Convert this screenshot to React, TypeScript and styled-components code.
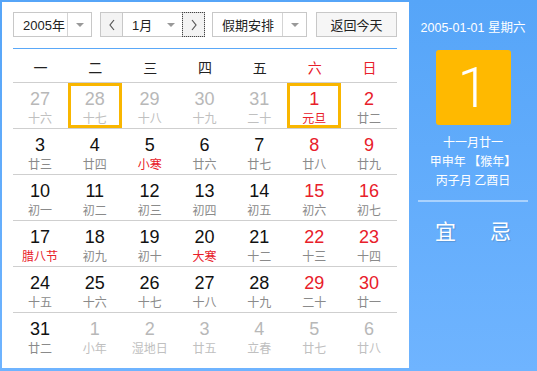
import React from 'react';
import styled, { createGlobalStyle } from 'styled-components';

const GlobalStyle = createGlobalStyle`
  body {
    margin: 0;
    font-family: 'Liberation Sans', 'Noto Sans CJK SC', sans-serif;
  }
`;

type Kind = 'prev' | 'cur' | 'next';
interface Day {
  num: number;
  lunar: string;
  kind: Kind;
  festival?: boolean;
  selected?: boolean;
}

const WEEK = ['一', '二', '三', '四', '五', '六', '日'];

const raw: [number, string, Kind, number?][] = [
  [27, '十六', 'prev'], [28, '十七', 'prev', 2], [29, '十八', 'prev'], [30, '十九', 'prev'], [31, '二十', 'prev'], [1, '元旦', 'cur', 3], [2, '廿二', 'cur'],
  [3, '廿三', 'cur'], [4, '廿四', 'cur'], [5, '小寒', 'cur', 1], [6, '廿六', 'cur'], [7, '廿七', 'cur'], [8, '廿八', 'cur'], [9, '廿九', 'cur'],
  [10, '初一', 'cur'], [11, '初二', 'cur'], [12, '初三', 'cur'], [13, '初四', 'cur'], [14, '初五', 'cur'], [15, '初六', 'cur'], [16, '初七', 'cur'],
  [17, '腊八节', 'cur', 1], [18, '初九', 'cur'], [19, '初十', 'cur'], [20, '大寒', 'cur', 1], [21, '十二', 'cur'], [22, '十三', 'cur'], [23, '十四', 'cur'],
  [24, '十五', 'cur'], [25, '十六', 'cur'], [26, '十七', 'cur'], [27, '十八', 'cur'], [28, '十九', 'cur'], [29, '二十', 'cur'], [30, '廿一', 'cur'],
  [31, '廿二', 'cur'], [1, '小年', 'next'], [2, '湿地日', 'next'], [3, '廿五', 'next'], [4, '立春', 'next'], [5, '廿七', 'next'], [6, '廿八', 'next'],
];

// flag: 1 = festival, 2 = selected, 3 = festival + selected
const days: Day[] = raw.map(([num, lunar, kind, flag = 0]) => ({
  num,
  lunar,
  kind,
  festival: (flag & 1) === 1,
  selected: (flag & 2) === 2,
}));

const weeks: Day[][] = [];
for (let i = 0; i < days.length; i += 7) weeks.push(days.slice(i, i + 7));

const Frame = styled.div`
  width: 537px;
  height: 371px;
  box-sizing: border-box;
  display: flex;
  padding: 2px 0 3px 2px;
  background: linear-gradient(180deg, #56a5f8 0%, #6fb4ff 100%);
`;

const Main = styled.div`
  width: 407px;
  box-sizing: border-box;
  background: #fff;
  padding: 10px 12px 0 11px;
`;

const Toolbar = styled.div`
  display: flex;
  height: 25px;
`;

const Select = styled.div<{ $w: number; $gap: number }>`
  width: ${(p) => p.$w}px;
  margin-right: ${(p) => p.$gap}px;
  box-sizing: border-box;
  border: 1px solid #c8c8c8;
  display: flex;
  align-items: stretch;
  font-size: 13px;
  color: #222;
`;

const SelectText = styled.span`
  flex: 1;
  display: flex;
  align-items: center;
  padding-left: 9px;
`;

const Caret = styled.span<{ $line?: boolean }>`
  width: 23px;
  display: flex;
  align-items: center;
  justify-content: center;
  border-left: ${(p) => (p.$line ? '1px solid #d4d4d4' : 'none')};
  &::after {
    content: '';
    border-left: 4px solid transparent;
    border-right: 4px solid transparent;
    border-top: 4px solid #999;
  }
`;

const MonthGroup = styled.div`
  width: 105px;
  margin-right: 7px;
  display: flex;
`;

const ArrowBtn = styled.div<{ $focus?: boolean }>`
  width: 23px;
  box-sizing: border-box;
  border: 1px solid #c8c8c8;
  background: #f3f3f3;
  display: flex;
  align-items: center;
  justify-content: center;
  outline: ${(p) => (p.$focus ? '1px dotted #444' : 'none')};
  outline-offset: -1px;
`;

const MonthSelect = styled.div`
  flex: 1;
  border-top: 1px solid #c8c8c8;
  border-bottom: 1px solid #c8c8c8;
  display: flex;
  font-size: 13px;
  color: #222;
`;

const TodayBtn = styled.div`
  width: 81px;
  box-sizing: border-box;
  border: 1px solid #c8c8c8;
  background: #f6f6f6;
  display: flex;
  align-items: center;
  justify-content: center;
  font-size: 13px;
  color: #222;
`;

const BlueRule = styled.div`
  margin-top: 11px;
  height: 1px;
  background: #5aa8f8;
`;

const WeekRow = styled.div`
  display: grid;
  grid-template-columns: repeat(7, 1fr);
  height: 33px;
  border-bottom: 1px solid #cfcfcf;
`;

const WeekCell = styled.div<{ $red: boolean }>`
  display: flex;
  align-items: center;
  justify-content: center;
  padding-top: 3px;
  font-size: 14px;
  color: ${(p) => (p.$red ? '#e8202a' : '#222')};
`;

const WeekLine = styled.div<{ $last: boolean }>`
  display: grid;
  grid-template-columns: repeat(7, 1fr);
  height: 46px;
  box-sizing: border-box;
  border-bottom: ${(p) => (p.$last ? 'none' : '1px solid #cfcfcf')};
`;

const Cell = styled.div<{ $selected: boolean }>`
  display: flex;
  flex-direction: column;
  align-items: center;
  box-sizing: border-box;
  height: 45px;
  margin-right: 1px;
  padding-top: 3px;
  border: 3px solid ${(p) => (p.$selected ? '#f9b600' : 'transparent')};
`;

const Num = styled.span<{ $color: string }>`
  font-size: 18px;
  line-height: 20px;
  color: ${(p) => p.$color};
`;

const Lunar = styled.span<{ $color: string }>`
  font-size: 12px;
  line-height: 16px;
  margin-top: 2px;
  color: ${(p) => p.$color};
`;

const Side = styled.div`
  flex: 1;
  display: flex;
  flex-direction: column;
  align-items: center;
  color: #fff;
`;

const DateLine = styled.div`
  margin-top: 18px;
  font-size: 12.5px;
  line-height: 16px;
`;

const BigDay = styled.div`
  margin-top: 14px;
  width: 75px;
  height: 75px;
  border-radius: 3px;
  background: #ffb900;
  display: flex;
  align-items: center;
  justify-content: center;
  font-family: Roboto, 'Liberation Sans', sans-serif;
  font-weight: 300;
  font-size: 56px;
  color: #fff;
`;

const LunarInfo = styled.div`
  margin-top: 7px;
  font-size: 12px;
  line-height: 19px;
  text-align: center;
  font-family: 'Noto Sans CJK SC', sans-serif;
`;

const SideRule = styled.div`
  margin-top: 11px;
  width: 110px;
  height: 2px;
  background: rgba(255, 255, 255, 0.45);
`;

const YiJi = styled.div`
  margin-top: 13px;
  display: flex;
  gap: 34px;
  font-size: 21px;
  font-family: 'Noto Sans CJK SC', sans-serif;
  text-shadow: 1px 1px 1px rgba(0, 0, 0, 0.15);
`;

const Chevron: React.FC<{ dir: 'left' | 'right' }> = ({ dir }) => (
  <svg width="8" height="12" viewBox="0 0 8 12">
    <polyline
      points={dir === 'left' ? '6,1 2,6 6,11' : '2,1 6,6 2,11'}
      fill="none"
      stroke="#555"
      strokeWidth="1.2"
    />
  </svg>
);

const dayColors = (d: Day, col: number) => {
  if (d.kind !== 'cur') return { num: '#b8b8b8', lunar: '#c0c0c0' };
  const weekend = col >= 5;
  return {
    num: weekend ? '#e8202a' : '#111',
    lunar: d.festival ? '#e8202a' : '#8a8a8a',
  };
};

const App: React.FC = () => {
  return (
    <>
      <GlobalStyle />
      <Frame>
        <Main>
          <Toolbar>
            <Select $w={79} $gap={8}>
              <SelectText>2005年</SelectText>
              <Caret $line />
            </Select>
            <MonthGroup>
              <ArrowBtn>
                <Chevron dir="left" />
              </ArrowBtn>
              <MonthSelect>
                <SelectText>1月</SelectText>
                <Caret />
              </MonthSelect>
              <ArrowBtn $focus>
                <Chevron dir="right" />
              </ArrowBtn>
            </MonthGroup>
            <Select $w={95} $gap={9}>
              <SelectText>假期安排</SelectText>
              <Caret $line />
            </Select>
            <TodayBtn>返回今天</TodayBtn>
          </Toolbar>
          <BlueRule />
          <WeekRow>
            {WEEK.map((w, i) => (
              <WeekCell key={w} $red={i >= 5}>
                {w}
              </WeekCell>
            ))}
          </WeekRow>
          {weeks.map((week, r) => (
            <WeekLine key={r} $last={r === weeks.length - 1}>
              {week.map((d, c) => {
                const color = dayColors(d, c);
                return (
                  <Cell key={c} $selected={!!d.selected}>
                    <Num $color={color.num}>{d.num}</Num>
                    <Lunar $color={color.lunar}>{d.lunar}</Lunar>
                  </Cell>
                );
              })}
            </WeekLine>
          ))}
        </Main>
        <Side>
          <DateLine>2005-01-01 星期六</DateLine>
          <BigDay>1</BigDay>
          <LunarInfo>
            十一月廿一
            <br />
            甲申年 【猴年】
            <br />
            丙子月 乙酉日
          </LunarInfo>
          <SideRule />
          <YiJi>
            <span>宜</span>
            <span>忌</span>
          </YiJi>
        </Side>
      </Frame>
    </>
  );
};

export default App;
